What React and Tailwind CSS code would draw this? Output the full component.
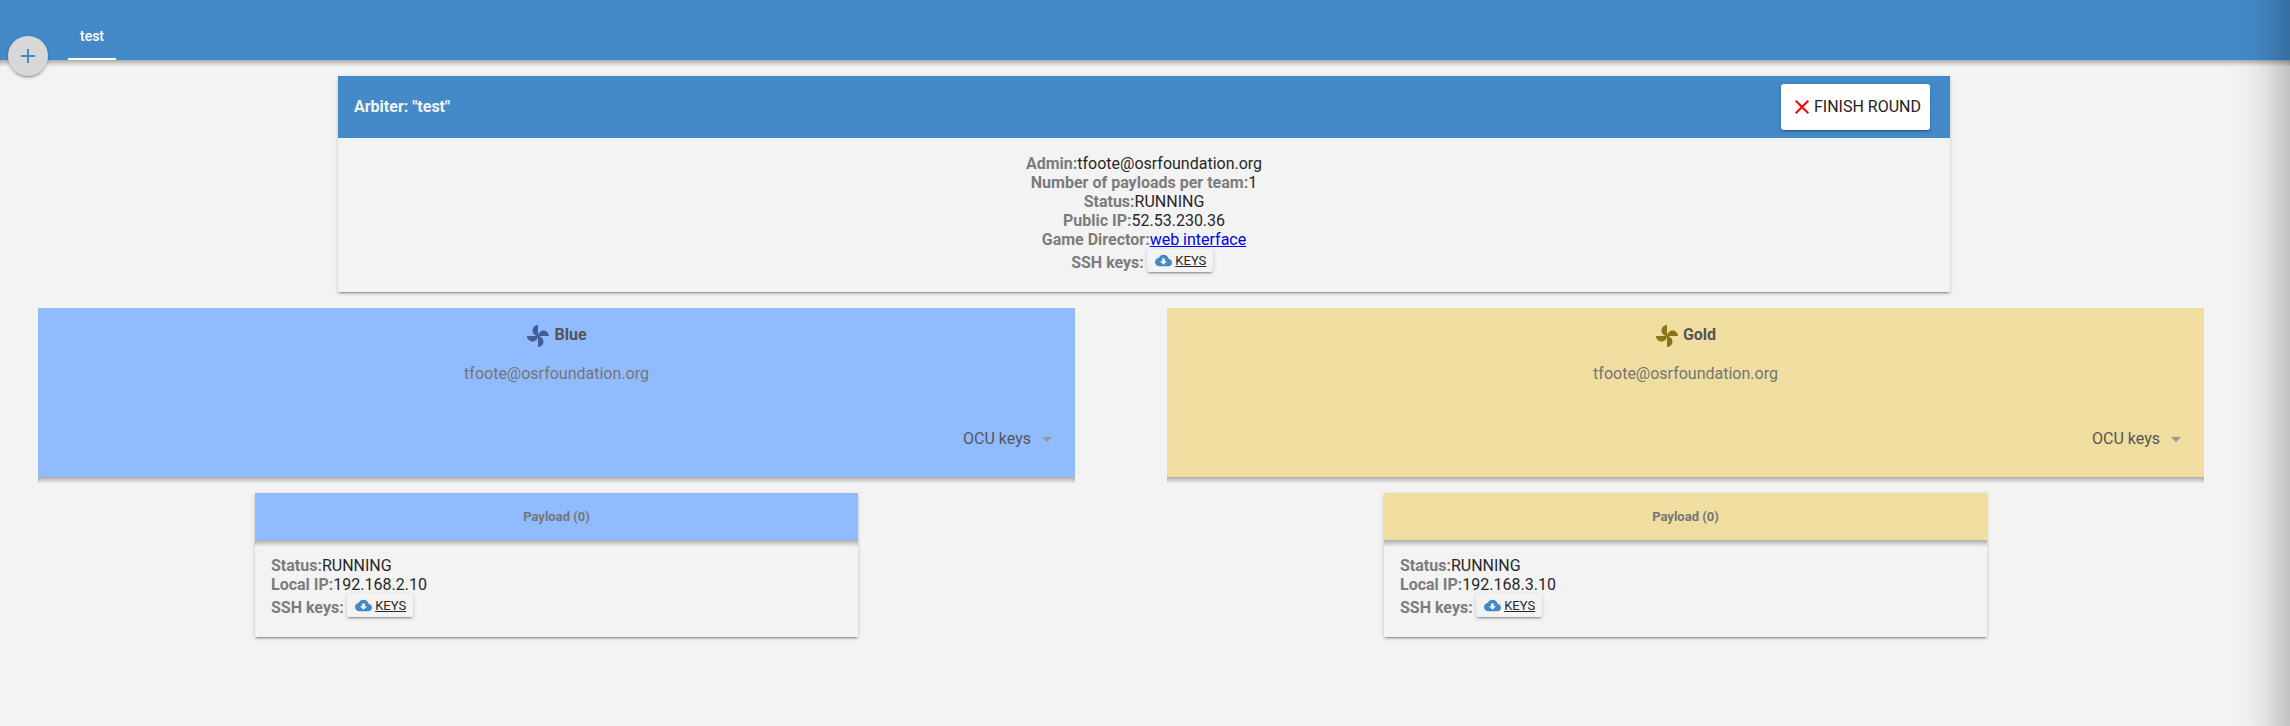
const EDGE = 'shadow-[0_2px_2px_0_rgba(0,0,0,0.14),0_1px_5px_0_rgba(0,0,0,0.12),0_3px_1px_-2px_rgba(0,0,0,0.2)]';
const DROP = 'h-1.5 shadow-[inset_0_5px_6px_-3px_rgba(0,0,0,0.4)]';

function Icon({ d, className }) {
  return (
    <svg viewBox="0 0 24 24" fill="currentColor" className={`shrink-0 ${className}`}>
      <path d={d} />
    </svg>
  );
}

const ADD = 'M19 13h-6v6h-2v-6H5v-2h6V5h2v6h6v2z';
const CLOSE = 'M19 6.41L17.59 5 12 10.59 6.41 5 5 6.41 10.59 12 5 17.59 6.41 19 12 13.41 17.59 19 19 17.59 13.41 12z';
const CLOUD = 'M19.35 10.04C18.67 6.59 15.64 4 12 4 9.11 4 6.6 5.64 5.35 8.04 2.34 8.36 0 10.91 0 14c0 3.31 2.69 6 6 6h13c2.76 0 5-2.24 5-5 0-2.64-2.05-4.78-4.65-4.96zM17 13l-5 5-5-5h3V9h4v4h3z';
const TOYS = 'M12 12c0-3 2.5-5.5 5.5-5.5S23 9 23 12H12zm0 0c0 3-2.5 5.5-5.5 5.5S1 15 1 12h11zm0 0c-3 0-5.5-2.5-5.5-5.5S9 1 12 1v11zm0 0c3 0 5.5 2.5 5.5 5.5S15 23 12 23V12z';

function Field({ label, children }) {
  return (
    <div className="h-[19px] leading-[19px]">
      <b className="font-bold text-[#7c7c7c]">{label}:</b>
      {children}
    </div>
  );
}

function KeysRow({ className = '' }) {
  return (
    <div className={`flex h-[23px] items-start ${className}`}>
      <b className="mt-1 font-bold leading-[19px] text-[#7c7c7c]">SSH keys:</b>
      <a className={`ml-[3px] flex h-[23px] w-[66px] items-center rounded-[3px] pl-2 ${EDGE}`}>
        <Icon d={CLOUD} className="size-[17px] text-[#448ac9]" />
        <span className="ml-[3.5px] text-[13px] leading-[15px] underline">KEYS</span>
      </a>
    </div>
  );
}

function Team({ name, ip, bg, iconColor }) {
  return (
    <section className="flex w-[1037px] flex-col items-center">
      <div className="w-full">
        <div className={`flex h-[169px] flex-col items-center ${bg}`}>
          <div className="mt-[15px] flex h-6 items-center gap-1 font-bold text-[#555]">
            <Icon d={TOYS} className={`mt-[2px] size-6 ${iconColor}`} />
            <span className="mb-[1px] leading-[19px]">{name}</span>
          </div>
          <div className="mt-[17px] leading-[19px] text-[#757575]">tfoote@osrfoundation.org</div>
          <div className="mt-[46px] flex items-center self-end pr-[23px] leading-[19px] text-[#555]">
            OCU keys
            <span className="ml-[11px] mt-[1px] border-x-[5px] border-t-[5px] border-x-transparent border-t-[#969696]" />
          </div>
        </div>
        <div className={DROP} />
      </div>
      <div className={`mt-[10px] h-[144px] w-[603px] ${EDGE}`}>
        <div className={`flex h-[47px] items-center justify-center text-[13px] font-bold text-[#757575] ${bg}`}>
          Payload (0)
        </div>
        <div className={DROP} />
        <div className="px-4 pt-[10px]">
          <Field label="Status">RUNNING</Field>
          <Field label="Local IP">{ip}</Field>
          <KeysRow />
        </div>
      </div>
    </section>
  );
}

export default function App() {
  return (
    <div className="relative h-[726px] w-[2290px] overflow-hidden bg-[#f3f3f3] font-[Roboto,sans-serif] text-[16px] text-[#272727]">
      <header className="relative">
        <div className="flex h-[60px] bg-[#448ac9] pl-[68px]">
          <div className="flex w-12 flex-col items-center justify-between pt-[26px] text-[14px] font-medium leading-5 text-white">
            test
            <span className="h-0.5 w-full bg-white" />
          </div>
        </div>
        <div className={DROP} />
        <button className={`absolute left-2 top-9 flex size-10 items-center justify-center rounded-full bg-[#d8d8d8] text-[#448ac9] ${EDGE}`}>
          <Icon d={ADD} className="size-6" />
        </button>
      </header>

      <section className={`ml-[338px] mt-[10px] h-[216px] w-[1612px] ${EDGE}`}>
        <div className="flex h-[62px] items-center justify-between bg-[#448ac9] pl-4 pr-5">
          <span className="mb-[2px] font-bold leading-[19px] text-[#f3f3f3]">Arbiter: "test"</span>
          <button className={`flex h-[46px] w-[149px] items-center rounded-[3px] bg-white pl-[9px] text-[#212121] ${EDGE}`}>
            <Icon d={CLOSE} className="size-6 text-[#f00]" />
            <span className="mb-[2px] leading-[19px]">FINISH ROUND</span>
          </button>
        </div>
        <div className="pt-4 text-center">
          <Field label="Admin">tfoote@osrfoundation.org</Field>
          <Field label="Number of payloads per team">1</Field>
          <Field label="Status">RUNNING</Field>
          <Field label="Public IP">52.53.230.36</Field>
          <Field label="Game Director">
            <a className="text-[#0000ee] underline">web interface</a>
          </Field>
          <KeysRow className="justify-center pr-1" />
        </div>
      </section>

      <main className="mt-4 flex gap-[92px] pl-[38px]">
        <Team name="Blue" ip="192.168.2.10" bg="bg-[#91bbff]" iconColor="text-[#435e9b]" />
        <Team name="Gold" ip="192.168.3.10" bg="bg-[#f0dea0]" iconColor="text-[#8b7512]" />
      </main>

      <div className="absolute -right-10 -top-10 h-[806px] w-10 shadow-[0_0_50px_4px_rgba(0,0,0,0.38)]" />
    </div>
  );
}
